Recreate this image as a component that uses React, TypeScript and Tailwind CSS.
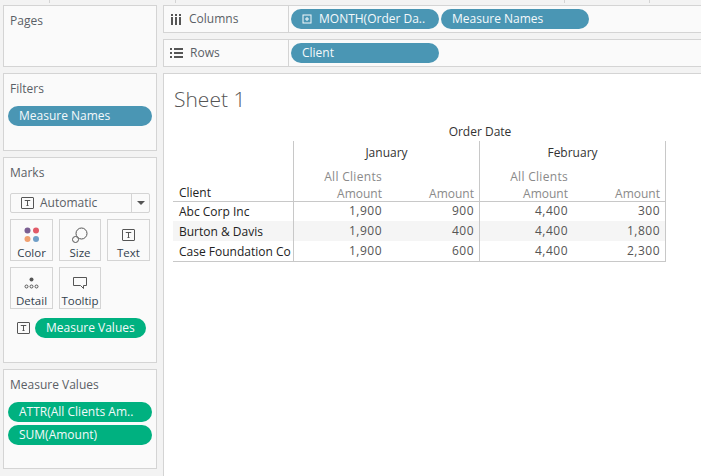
import { ReactNode } from "react";

const Pill = ({
  color,
  className,
  children,
}: {
  color: "blue" | "green";
  className: string;
  children: ReactNode;
}) => (
  <div
    className={`h-5 rounded-full flex items-center text-[12px] leading-5 text-[#f4f9fb] whitespace-nowrap overflow-hidden ${
      color === "blue" ? "bg-[#4a96b4]" : "bg-[#00b180]"
    } ${className}`}
  >
    {children}
  </div>
);

const TIcon = ({ className }: { className: string }) => (
  <svg viewBox="0 0 13 12" className={className} fill="none">
    <rect x="0.5" y="0.5" width="12" height="11" stroke="#555" rx="0.5" />
    <path d="M4 4V3.5h5V4M6.5 3.5v5M5.5 8.5h2" stroke="#555" />
  </svg>
);

const MarkButton = ({ label, icon }: { label: string; icon: ReactNode }) => (
  <div className="h-[42px] border border-[#d4d4d4] flex flex-col items-center text-[11.5px] text-[#333f4d]">
    <div className="h-[22px] mt-[4px] flex items-center justify-center">
      {icon}
    </div>
    <span className="leading-[14px]">{label}</span>
  </div>
);

const Card = ({
  title,
  className,
  children,
}: {
  title: string;
  className: string;
  children?: ReactNode;
}) => (
  <div
    className={`bg-[#fafafa] border border-[#d4d4d4] flex flex-col ${className}`}
  >
    <div className="text-[12px] leading-4 text-[#5a5f66] ml-[6px] mt-[7px]">
      {title}
    </div>
    {children}
  </div>
);

const rows = [
  ["Abc Corp Inc", "1,900", "900", "4,400", "300"],
  ["Burton & Davis", "1,900", "400", "4,400", "1,800"],
  ["Case Foundation Co", "1,900", "600", "4,400", "2,300"],
];

const App = () => {
  return (
    <div
      className="w-[701px] h-[476px] bg-[#f3f3f3] overflow-hidden"
      style={{ fontFamily: '"Open Sans", "Noto Sans", sans-serif' }}
    >
      {/* strip of tab separators on top */}
      <div className="h-[5px] flex">
        <div className="w-[50px] h-[3px] border-r border-[#d4d4d4]" />
        <div className="w-[126px] h-[3px] border-r border-[#d4d4d4]" />
        <div className="w-[389px] h-[3px] border-r border-[#d4d4d4]" />
        <div className="w-[85px] h-[3px] border-r border-[#d4d4d4]" />
      </div>

      <div className="flex pl-[3px] gap-[6px]">
        {/* left cards */}
        <div className="w-[154px] flex flex-col gap-[6px] shrink-0">
          <Card title="Pages" className="h-[62px]" />
          <Card title="Filters" className="h-[78px]">
            <Pill color="blue" className="w-[144px] ml-[4px] mt-[9px] pl-[11px]">
              Measure Names
            </Pill>
          </Card>
          <Card title="Marks" className="h-[206px]">
            <div className="mx-[6px] mt-[12px] h-5 border border-[#d4d4d4] rounded-[2px] flex items-center text-[12px] text-[#5a5f66]">
              <TIcon className="w-[13px] h-3 ml-[10px]" />
              <span className="ml-[6px] flex-1">Automatic</span>
              <div className="w-[18px] h-full border-l border-[#d4d4d4] flex items-center justify-center">
                <div className="w-0 h-0 border-x-[4px] border-x-transparent border-t-[4px] border-t-[#555]" />
              </div>
            </div>
            <div className="mx-[6px] mt-[6px] grid grid-cols-[43px_42px_43px] gap-x-[6px] gap-y-[6px]">
              <MarkButton
                label="Color"
                icon={
                  <svg width="16" height="16" viewBox="0 0 16 16">
                    <circle cx="3.5" cy="3.5" r="3" fill="#7b5f92" />
                    <circle cx="12" cy="3.5" r="3" fill="#e15a68" />
                    <circle cx="3.5" cy="12" r="3" fill="#f0a070" />
                    <circle cx="12" cy="12" r="3" fill="#6f9fc8" />
                  </svg>
                }
              />
              <MarkButton
                label="Size"
                icon={
                  <svg width="16" height="16" viewBox="0 0 16 16" fill="none">
                    <circle cx="9.5" cy="6.5" r="5.5" stroke="#555" />
                    <circle cx="3.5" cy="12.5" r="3" fill="#fafafa" stroke="#555" />
                  </svg>
                }
              />
              <MarkButton
                label="Text"
                icon={<TIcon className="w-[13px] h-3" />}
              />
              <MarkButton
                label="Detail"
                icon={
                  <svg width="15" height="12" viewBox="0 0 15 12" fill="none">
                    <circle cx="7.5" cy="2.5" r="2" fill="#555" />
                    <circle cx="2.5" cy="9.5" r="1.5" stroke="#555" />
                    <circle cx="7.5" cy="9.5" r="1.5" stroke="#555" />
                    <circle cx="12.5" cy="9.5" r="1.5" stroke="#555" />
                  </svg>
                }
              />
              <MarkButton
                label="Tooltip"
                icon={
                  <svg width="14" height="14" viewBox="0 0 14 14" fill="none">
                    <path d="M.5 1.5h13v8h-3v3l-3-3h-7z" stroke="#555" />
                  </svg>
                }
              />
            </div>
            <div className="flex items-center mt-[9px] ml-[13px]">
              <TIcon className="w-[13px] h-3" />
              <Pill color="green" className="w-[111px] ml-[5px] pl-[11px]">
                Measure Values
              </Pill>
            </div>
          </Card>
          <Card title="Measure Values" className="h-[100px]">
            <Pill color="green" className="w-[144px] ml-[4px] mt-[9px] pl-[11px]">
              ATTR(All Clients Am..
            </Pill>
            <Pill color="green" className="w-[144px] ml-[4px] mt-[3px] pl-[11px]">
              SUM(Amount)
            </Pill>
          </Card>
        </div>

        {/* right side */}
        <div className="flex-1 flex flex-col gap-[6px] min-w-0">
          <div className="h-[28px] bg-[#fafafa] border-y border-l border-[#d4d4d4] flex items-center">
            <div className="w-[125px] h-full border-r border-[#d4d4d4] flex items-center text-[12px] text-[#5a5f66]">
              <svg width="11" height="11" viewBox="0 0 11 11" className="ml-[7px]" fill="#555">
                <rect x="0" y="3" width="2" height="8" />
                <rect x="4" y="3" width="2" height="8" />
                <rect x="8" y="3" width="2" height="8" />
                <rect x="0" y="0" width="2" height="2" />
                <rect x="4" y="0" width="2" height="2" />
                <rect x="8" y="0" width="2" height="2" />
              </svg>
              <span className="ml-[7px]">Columns</span>
            </div>
            <Pill color="blue" className="w-[148px] ml-[2px] pl-[11px]">
              <svg width="11" height="11" viewBox="0 0 11 11" fill="none" className="mr-[6px] shrink-0">
                <rect x="1" y="1" width="8" height="8" stroke="#f4f9fb" />
                <path d="M3 5h4M5 3v4" stroke="#f4f9fb" />
              </svg>
              MONTH(Order Da..
            </Pill>
            <Pill color="blue" className="w-[148px] ml-[2px] pl-[11px]">
              Measure Names
            </Pill>
          </div>
          <div className="h-[28px] bg-[#fafafa] border-y border-l border-[#d4d4d4] flex items-center">
            <div className="w-[125px] h-full border-r border-[#d4d4d4] flex items-center text-[12px] text-[#5a5f66]">
              <svg width="13" height="11" viewBox="0 0 13 11" className="ml-[6px]" fill="#555">
                <rect x="0" y="0" width="2" height="2" />
                <rect x="4" y="0" width="9" height="2" />
                <rect x="0" y="4" width="2" height="2" />
                <rect x="4" y="4" width="9" height="2" />
                <rect x="0" y="8" width="2" height="2" />
                <rect x="4" y="8" width="9" height="2" />
              </svg>
              <span className="ml-[7px]">Rows</span>
            </div>
            <Pill color="blue" className="w-[148px] ml-[2px] pl-[11px]">
              Client
            </Pill>
          </div>

          {/* worksheet */}
          <div className="h-[403px] bg-white border-t border-l border-[#d4d4d4] pl-[9px]">
            <div className="text-[21px] leading-7 font-light text-[#555] mt-[11px] ml-[1px]">
              Sheet 1
            </div>
            <div className="mt-[11px] w-[493px] text-[12px] text-[#555]">
              <div className="ml-[121px] h-[17px] leading-4 text-center text-[#333]">
                Order Date
              </div>
              <div className="grid grid-cols-[121px_93px_93px_93px_93px]">
                <div className="border-r border-[#c8c8c8] h-[22px]" />
                <div className="col-span-2 border-r border-[#c8c8c8] h-[22px] leading-[23px] text-center text-[#333]">
                  January
                </div>
                <div className="col-span-2 border-r border-[#c8c8c8] h-[22px] leading-[23px] text-center text-[#333]">
                  February
                </div>

                <div className="border-r border-b border-[#c8c8c8] h-[39px] pt-[22px] pl-[6px] leading-4 text-[#222] font-medium">
                  Client
                </div>
                {[0, 1].map((i) => (
                  <div key={i} className="contents">
                    <div className="border-b border-[#c8c8c8] h-[39px] pt-[5px] pr-[5px] text-right text-[#8a8a8a] leading-[17px]">
                      <div className="tracking-[0.3px]">All Clients</div>
                      <div>Amount</div>
                    </div>
                    <div className="border-b border-r border-[#c8c8c8] h-[39px] pt-[22px] pr-[5px] text-right text-[#8a8a8a] leading-[17px]">
                      Amount
                    </div>
                  </div>
                ))}

                {rows.map((row, r) => (
                  <div key={row[0]} className="contents">
                    {row.map((cell, c) => (
                      <div
                        key={c}
                        className={`whitespace-nowrap ${
                          r === 0 ? "h-[19px]" : r === 1 ? "h-5" : "h-[21px]"
                        } ${r === 1 ? "bg-[#f5f5f5]" : "bg-white"} ${
                          r === 2 ? "border-b border-[#c8c8c8]" : ""
                        } ${
                          c === 0
                            ? `pl-[6px] font-medium text-[#222] border-r border-[#c8c8c8] overflow-hidden ${
                                r === 0 ? "leading-[20px]" : "leading-[22px]"
                              }`
                            : `pr-[5px] text-right tracking-[0.5px] ${
                                r === 0 ? "leading-[18px]" : "leading-[20px]"
                              }`
                        } ${c === 2 || c === 4 ? "border-r border-[#c8c8c8]" : ""}`}
                      >
                        {cell}
                      </div>
                    ))}
                  </div>
                ))}
              </div>
            </div>
          </div>
        </div>
      </div>
    </div>
  );
};

export default App;
